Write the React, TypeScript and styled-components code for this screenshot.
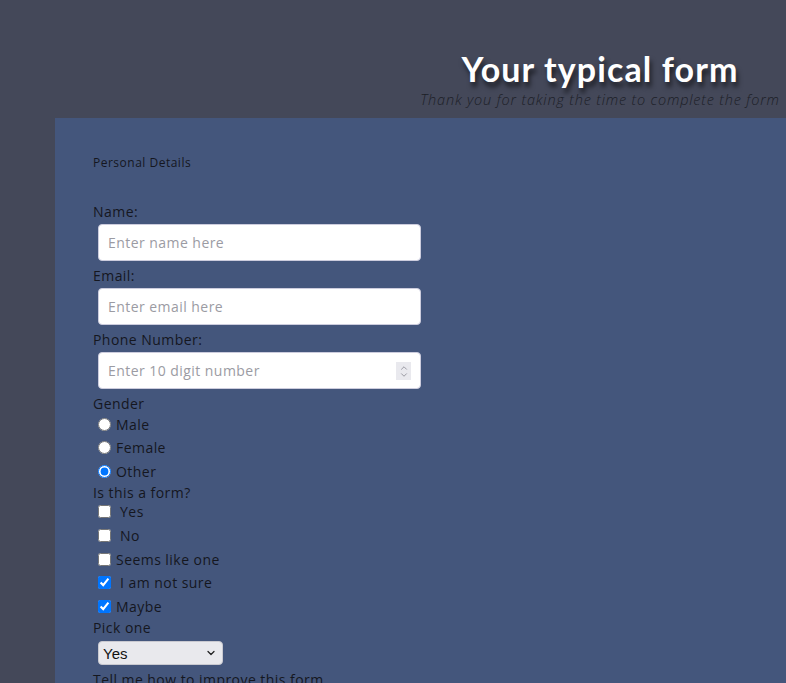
import React from 'react';
import styled, { createGlobalStyle } from 'styled-components';
import { ChevronDown, ChevronUp } from 'lucide-react';

const GlobalStyle = createGlobalStyle`
  html {
    scrollbar-width: none;
  }
  html::-webkit-scrollbar {
    display: none;
  }
  body {
    margin: 0;
    background-color: #444859;
    font-family: 'Open Sans', 'DejaVu Sans', sans-serif;
    color: #15171f;
    overflow-x: hidden;
  }
`;

const Page = styled.div`
  width: 1200px;
  padding-top: 46px;
`;

const Header = styled.header`
  text-align: center;
  height: 72px;
`;

const Title = styled.h1`
  margin: 0;
  font-family: 'Lato', sans-serif;
  font-weight: 700;
  font-size: 34px;
  line-height: 46px;
  color: #ffffff;
  letter-spacing: 1.1px;
  text-shadow: 2px 5px 5px rgba(0, 0, 0, 0.6);
`;

const Subtitle = styled.p`
  margin: -2px 0 0 0;
  font-size: 14.5px;
  line-height: 20px;
  font-style: italic;
  font-weight: 300;
  color: #1c1e27;
  letter-spacing: 0.82px;
`;

const Panel = styled.form`
  margin: 0 55px;
  background-color: #44567c;
  padding: 36px 38px 40px;
  min-height: 700px;
`;

const Section = styled.h2`
  margin: 0 0 29px 0;
  font-size: 12px;
  font-weight: 400;
  line-height: 18px;
  letter-spacing: 0.5px;
`;

const Label = styled.div`
  font-size: 14px;
  line-height: 21px;
  letter-spacing: 0.45px;
`;

const Field = styled.div`
  position: relative;
  width: 323px;
  margin: 2px 0 4px 5px;
`;

const TextInput = styled.input`
  display: block;
  box-sizing: border-box;
  width: 100%;
  height: 37px;
  margin: 0;
  padding: 0 9px;
  border: 1px solid #ccd;
  border-radius: 4px;
  font-family: inherit;
  font-size: 14px;
  letter-spacing: 0.45px;
  color: #222;
  background: #ffffff;
  &::placeholder {
    color: #9b9ba3;
  }
  &::-webkit-inner-spin-button {
    -webkit-appearance: none;
  }
`;

const Spinner = styled.span`
  position: absolute;
  right: 10px;
  top: 10px;
  width: 15px;
  height: 18px;
  background: #e9e9ee;
  display: flex;
  flex-direction: column;
  align-items: center;
  justify-content: center;
  color: #8a8a94;
  pointer-events: none;
  svg {
    margin: -1.5px 0;
  }
`;

const Options = styled.div<{ $gap: number; $offset: number }>`
  display: flex;
  flex-direction: column;
  gap: ${(props) => props.$gap}px;
  margin-top: ${(props) => props.$offset}px;
`;

const Option = styled.label`
  display: flex;
  align-items: center;
  font-size: 14px;
  line-height: 21px;
  letter-spacing: 0.45px;
  white-space: pre;
  input {
    margin: 0 5px 0 5px;
    width: 13px;
    height: 13px;
  }
`;

const SelectWrap = styled.div`
  position: relative;
  width: 125px;
  margin: 3px 0 4px 5px;
`;

const Select = styled.select`
  display: block;
  appearance: none;
  box-sizing: border-box;
  width: 100%;
  height: 24px;
  padding: 0 4px;
  border: 1px solid #c9c9d0;
  border-radius: 4px;
  background: #e9e9ed;
  color: #111;
  font-family: 'Liberation Sans', Arial, sans-serif;
  font-size: 15px;
`;

const Caret = styled.span`
  position: absolute;
  right: 6px;
  top: 6px;
  display: flex;
  color: #222;
  pointer-events: none;
`;

const App = () => {
  return (
    <>
      <GlobalStyle />
      <Page>
        <Header>
          <Title>Your typical form</Title>
          <Subtitle>Thank you for taking the time to complete the form</Subtitle>
        </Header>
        <Panel onSubmit={(e) => e.preventDefault()}>
          <Section>Personal Details</Section>
          <Label>Name:</Label>
          <Field>
            <TextInput type="text" placeholder="Enter name here" />
          </Field>
          <Label>Email:</Label>
          <Field>
            <TextInput type="email" placeholder="Enter email here" />
          </Field>
          <Label>Phone Number:</Label>
          <Field>
            <TextInput type="number" placeholder="Enter 10 digit number" />
            <Spinner>
              <ChevronUp size={10} strokeWidth={2} />
              <ChevronDown size={10} strokeWidth={2} />
            </Spinner>
          </Field>
          <Label>Gender</Label>
          <Options $gap={2.5} $offset={-0.5}>
            <Option><input type="radio" name="gender" />Male</Option>
            <Option><input type="radio" name="gender" />Female</Option>
            <Option><input type="radio" name="gender" defaultChecked />Other</Option>
          </Options>
          <Label>Is this a form?</Label>
          <Options $gap={2.75} $offset={-1.5}>
            <Option><input type="checkbox" /> Yes</Option>
            <Option><input type="checkbox" /> No</Option>
            <Option><input type="checkbox" />Seems like one</Option>
            <Option><input type="checkbox" defaultChecked /> I am not sure</Option>
            <Option><input type="checkbox" defaultChecked />Maybe</Option>
          </Options>
          <Label>Pick one</Label>
          <SelectWrap>
            <Select defaultValue="Yes">
              <option>Yes</option>
              <option>No</option>
              <option>Maybe</option>
            </Select>
            <Caret>
              <ChevronDown size={12} strokeWidth={2.5} />
            </Caret>
          </SelectWrap>
          <Label>Tell me how to improve this form</Label>
        </Panel>
      </Page>
    </>
  );
};

export default App;
